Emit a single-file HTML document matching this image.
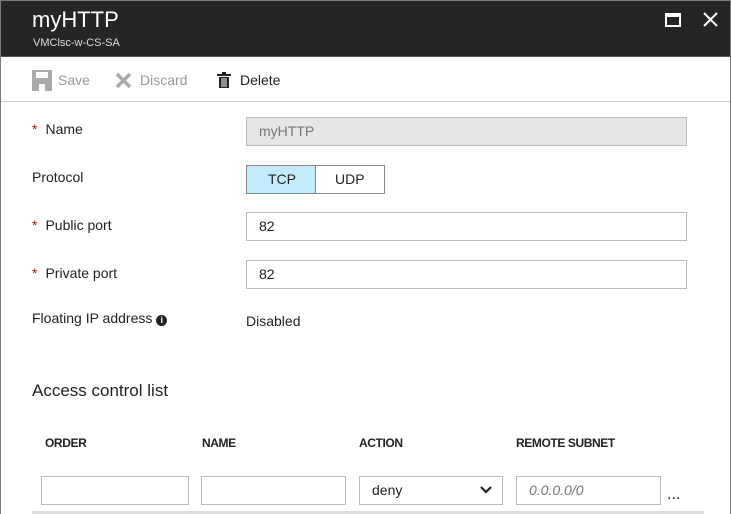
<!DOCTYPE html>
<html><head><style>
*{box-sizing:border-box;margin:0;padding:0}
body{width:731px;height:514px;overflow:hidden;background:#fff;font-family:"Liberation Sans",sans-serif;color:#222;position:relative}
.frame{position:absolute;left:0;top:0;width:731px;height:514px;border:1px solid #7a7a7a;border-bottom:none}
.hdr{position:absolute;left:0;top:0;width:731px;height:57px;background:#252525;border:1px solid #555}
.t{position:absolute;left:32px;top:7px;color:#fff;font-size:22px}
.st{position:absolute;left:33px;top:37px;color:#ddd;font-size:11px}
.tb{position:absolute;top:72px;font-size:14px}
.sep{position:absolute;left:1px;top:101px;width:729px;height:1px;background:#ccc}
.lbl{position:absolute;left:32px;font-size:14px}
.lbl b{color:#c00;font-weight:normal;margin-right:8px}
.inp{position:absolute;height:29px;border:1px solid #bbb;font-size:14px;padding:5px 0 0 12px;background:#fff}
.th{position:absolute;top:436px;font-size:12px;font-weight:bold;letter-spacing:-0.4px}
</style></head><body>
<div class="hdr"></div>
<div class="t">myHTTP</div>
<div class="st">VMClsc-w-CS-SA</div>
<div style="position:absolute;left:665px;top:13px;width:16px;height:14px;border:2px solid #fff;border-top-width:4px"></div>
<svg style="position:absolute;left:703px;top:12px" width="15" height="15"><path d="M1 1L14 14M14 1L1 14" stroke="#fff" stroke-width="2"/></svg>
<svg style="position:absolute;left:32px;top:70px" width="20" height="21"><path d="M0 0h20v21h-20z M4 2v6h12v-6z M7 14v7h6v-7z" fill="#aaa" fill-rule="evenodd"/></svg>
<div class="tb" style="left:58px;color:#999">Save</div>
<svg style="position:absolute;left:115px;top:72px" width="17" height="17"><path d="M2 2L15 15M15 2L2 15" stroke="#aaa" stroke-width="3.5"/></svg>
<div class="tb" style="left:140px;color:#999">Discard</div>
<svg style="position:absolute;left:217px;top:72px" width="14" height="16"><path d="M0 2h14v2h-14z M5 0h4v2h-4z M2 5h10v11h-10z" fill="#222"/><path d="M5 6v9M7 6v9M9 6v9" stroke="#fff" stroke-width="1"/></svg>
<div class="tb" style="left:240px">Delete</div>
<div class="sep"></div>
<div class="lbl" style="top:121px"><b>*</b>Name</div>
<div class="inp" style="left:246px;top:117px;width:441px;background:#e6e6e6;color:#777">myHTTP</div>
<div class="lbl" style="top:169px">Protocol</div>
<div class="inp" style="left:246px;top:165px;width:70px;background:#c2ecfc;border-color:#888;padding-left:21px">TCP</div>
<div class="inp" style="left:315px;top:165px;width:70px;border-color:#888;padding-left:19px">UDP</div>
<div class="lbl" style="top:217px"><b>*</b>Public port</div>
<div class="inp" style="left:246px;top:212px;width:441px">82</div>
<div class="lbl" style="top:265px"><b>*</b>Private port</div>
<div class="inp" style="left:246px;top:260px;width:441px">82</div>
<div class="lbl" style="top:310px">Floating IP address <span style="display:inline-block;width:11px;height:11px;border-radius:50%;background:#222;color:#fff;font-size:9px;text-align:center;line-height:11px;font-weight:bold;vertical-align:0">i</span></div>
<div class="lbl" style="left:246px;top:313px">Disabled</div>
<div style="position:absolute;left:32px;top:381px;font-size:17px">Access control list</div>
<div class="th" style="left:45px">ORDER</div>
<div class="th" style="left:202px">NAME</div>
<div class="th" style="left:359px">ACTION</div>
<div class="th" style="left:516px">REMOTE SUBNET</div>
<div class="inp" style="left:41px;top:476px;width:148px"></div>
<div class="inp" style="left:201px;top:476px;width:145px"></div>
<div class="inp" style="left:359px;top:476px;width:144px">deny</div>
<svg style="position:absolute;left:480px;top:486px" width="12" height="8"><path d="M1 1L6 6L11 1" stroke="#222" stroke-width="2.2" fill="none"/></svg>
<div class="inp" style="left:516px;top:476px;width:145px;color:#777;font-style:italic">0.0.0.0/0</div>
<div style="position:absolute;left:667px;top:486px;font-size:16px">...</div>
<div style="position:absolute;left:32px;top:511px;width:672px;height:3px;background:#ddd"></div>
<div class="frame"></div>
</body></html>
